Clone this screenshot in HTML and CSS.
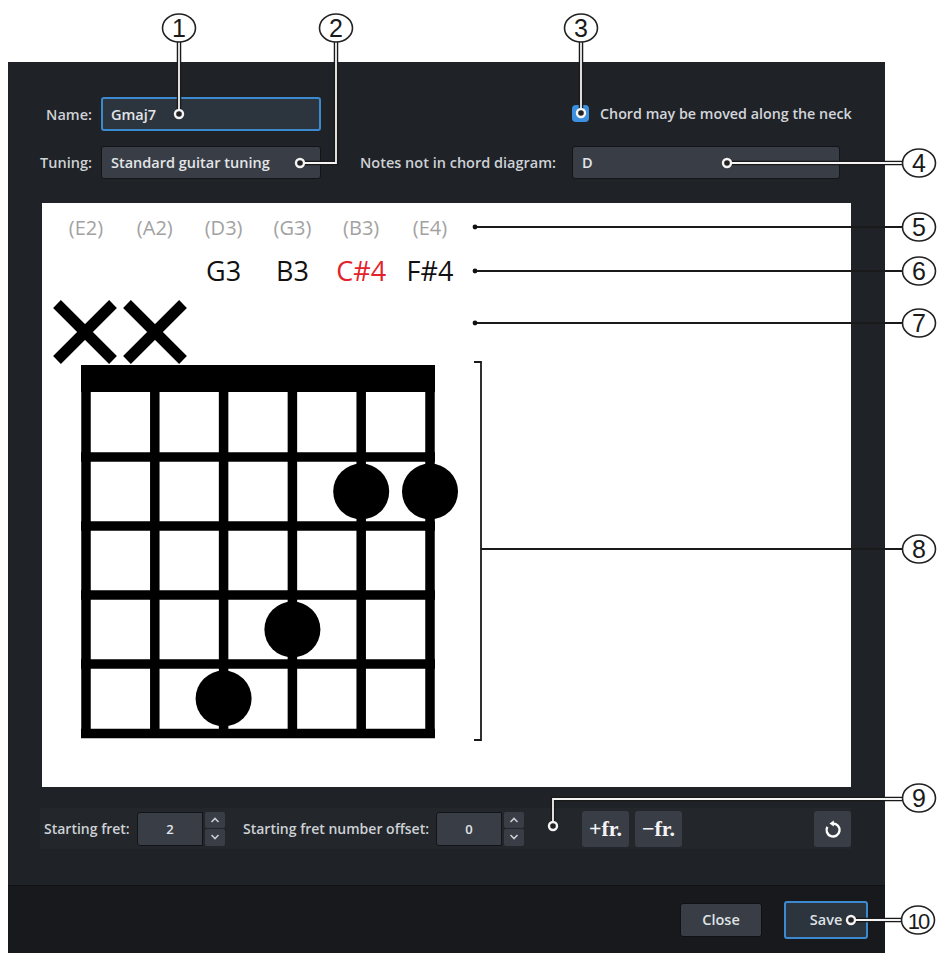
FILE: index.html
```html
<!DOCTYPE html>
<html>
<head>
  <meta charset="utf-8">
  <title>Edit Chord Diagram</title>
  <link rel="stylesheet" href="styles.css">
</head>
<body>

<div class="dialog">
  <!-- name, tuning and options -->
  <div class="fields">
    <label class="lbl">Name:</label>
    <div class="input active">Gmaj7</div>
    <div></div>
    <div class="check-row">
      <span class="checkbox">
        <svg viewBox="0 0 17 17" width="17" height="17"><path class="tick" d="M4.5 8.5 L7.5 11.5 L12.5 5.5"/></svg>
      </span>
      Chord may be moved along the neck
    </div>

    <label class="lbl">Tuning:</label>
    <div class="input select">Standard guitar tuning</div>
    <label class="lbl wide">Notes not in chord diagram:</label>
    <div class="input">D</div>
  </div>

  <!-- chord diagram canvas -->
  <div class="canvas">
    <svg class="diagram" viewBox="0 0 809 584" width="809" height="584">
      <g class="tuning">
        <text x="44" y="32">(E2)</text>
        <text x="112.8" y="32">(A2)</text>
        <text x="181.6" y="32">(D3)</text>
        <text x="250.4" y="32">(G3)</text>
        <text x="319.2" y="32">(B3)</text>
        <text x="388" y="32">(E4)</text>
      </g>
      <g class="notes">
        <text x="181.6" y="78">G3</text>
        <text x="250.4" y="78">B3</text>
        <text x="319.2" y="78" class="hl">C#4</text>
        <text x="388" y="78">F#4</text>
      </g>
      <g class="mute">
        <path d="M15 101 L71 157 M71 101 L15 157"/>
        <path d="M85 101 L141 157 M141 101 L85 157"/>
      </g>
      <rect class="nut" x="39" y="162" width="354" height="27"/>
      <g class="grid">
        <line x1="44" y1="162" x2="44" y2="535"/>
        <line x1="112.8" y1="162" x2="112.8" y2="535"/>
        <line x1="181.6" y1="162" x2="181.6" y2="535"/>
        <line x1="250.4" y1="162" x2="250.4" y2="535"/>
        <line x1="319.2" y1="162" x2="319.2" y2="535"/>
        <line x1="388" y1="162" x2="388" y2="535"/>
        <line x1="39" y1="254" x2="393" y2="254"/>
        <line x1="39" y1="323" x2="393" y2="323"/>
        <line x1="39" y1="392" x2="393" y2="392"/>
        <line x1="39" y1="461" x2="393" y2="461"/>
        <line x1="39" y1="530.5" x2="393" y2="530.5"/>
      </g>
      <g class="dots">
        <circle cx="319.2" cy="288.5" r="28"/>
        <circle cx="388" cy="288.5" r="28"/>
        <circle cx="250.4" cy="426.5" r="28"/>
        <circle cx="181.6" cy="495.5" r="28"/>
      </g>
    </svg>
  </div>

  <!-- fret controls -->
  <div class="controls">
    <span class="ctl-label first">Starting fret:</span>
    <div class="spin">
      <div class="spin-val">2</div>
      <div class="spin-btns">
        <span><svg viewBox="0 0 10 6" width="10" height="6"><path d="M1.5 5 L5 1.5 L8.5 5"/></svg></span>
        <span><svg viewBox="0 0 10 6" width="10" height="6"><path d="M1.5 1 L5 4.5 L8.5 1"/></svg></span>
      </div>
    </div>
    <span class="ctl-label second">Starting fret number offset:</span>
    <div class="spin">
      <div class="spin-val">0</div>
      <div class="spin-btns">
        <span><svg viewBox="0 0 10 6" width="10" height="6"><path d="M1.5 5 L5 1.5 L8.5 5"/></svg></span>
        <span><svg viewBox="0 0 10 6" width="10" height="6"><path d="M1.5 1 L5 4.5 L8.5 1"/></svg></span>
      </div>
    </div>
    <div class="fr-btns">
      <button class="fr">+fr.</button>
      <button class="fr">&minus;fr.</button>
    </div>
    <button class="reset">
      <svg viewBox="0 0 20 20" width="20" height="20">
        <path class="arc" d="M10 4.5 A6.5 6.5 0 1 1 4.4 7.8"/>
        <path class="head" d="M6.5 4.5 L10.8 1.6 L10.8 7.4 Z"/>
      </svg>
    </button>
  </div>

  <div class="footer">
    <button class="btn">Close</button>
    <button class="btn primary">Save</button>
  </div>
</div>

<!-- numbered callouts drawn over the screenshot -->
<svg class="callouts" viewBox="0 0 946 956" width="946" height="956">
  <g class="lead-out">
    <path d="M179 42 V114"/>
    <path d="M336 42 V163 H300"/>
    <path d="M581 42 V113"/>
    <path d="M727 163 H903"/>
    <path d="M553 826 V799 H902"/>
    <path d="M851 920 H901"/>
  </g>
  <g class="lead-in">
    <path d="M179 42 V114"/>
    <path d="M336 42 V163 H300"/>
    <path d="M581 42 V113"/>
    <path d="M727 163 H903"/>
    <path d="M553 826 V799 H902"/>
    <path d="M851 920 H901"/>
  </g>
  <g class="ring">
    <circle cx="179" cy="114" r="4"/>
    <circle cx="300" cy="163" r="4"/>
    <circle cx="581" cy="113" r="4"/>
    <circle cx="727" cy="163" r="4"/>
    <circle cx="553" cy="826" r="4"/>
    <circle cx="851" cy="920" r="4"/>
  </g>
  <g class="lead">
    <path d="M475 227 H903"/>
    <path d="M475 271 H903"/>
    <path d="M475 323 H903"/>
    <path d="M474 362 H481 V740 H474 M481 549 H903"/>
  </g>
  <g class="pin">
    <circle cx="475" cy="227" r="2.4"/>
    <circle cx="475" cy="271" r="2.4"/>
    <circle cx="475" cy="323" r="2.4"/>
  </g>
  <g class="num">
    <ellipse cx="179" cy="28" rx="16.5" ry="14"/><text x="179" y="37">1</text>
    <ellipse cx="336" cy="28" rx="16.5" ry="14"/><text x="336" y="37">2</text>
    <ellipse cx="581" cy="28" rx="16.5" ry="14"/><text x="581" y="37">3</text>
    <ellipse cx="919" cy="163" rx="16.5" ry="14"/><text x="919" y="172">4</text>
    <ellipse cx="919" cy="227" rx="16.5" ry="14"/><text x="919" y="236">5</text>
    <ellipse cx="919" cy="271" rx="16.5" ry="14"/><text x="919" y="280">6</text>
    <ellipse cx="919" cy="323" rx="16.5" ry="14"/><text x="919" y="332">7</text>
    <ellipse cx="919" cy="549" rx="16.5" ry="14"/><text x="919" y="558">8</text>
    <ellipse cx="919" cy="798" rx="16.5" ry="14"/><text x="919" y="807">9</text>
    <ellipse cx="918" cy="920" rx="16.5" ry="14"/><text x="918" y="929" class="two">10</text>
  </g>
</svg>

</body>
</html>
```

FILE: styles.css
```css
/* page */
body {
  margin: 0;
  width: 946px;
  height: 956px;
  background: #fff;
  font-family: "Open Sans", "Noto Sans", sans-serif;
  position: relative;
  overflow: hidden;
}

/* dialog frame */
.dialog {
  margin: 62px 0 0 8px;
  width: 877px;
  height: 891px;
  background: #1f2227;
  display: flex;
  flex-direction: column;
}

/* top form */
.fields {
  display: grid;
  grid-template-columns: 93px 220px 251px 268px;
  grid-template-rows: 34px 33px;
  row-gap: 15px;
  padding-top: 35px;
  align-items: center;
}

.lbl {
  text-align: right;
  padding-right: 9px;
  color: #cdd1d5;
  font-size: 14.5px;
  font-weight: 600;
}

.lbl.wide {
  padding-right: 16px;
}

.input {
  height: 100%;
  box-sizing: border-box;
  display: flex;
  align-items: center;
  padding-left: 9px;
  background: #393d45;
  border: 1px solid #121417;
  border-radius: 3px;
  color: #e3e6e9;
  font-size: 14.5px;
  font-weight: 600;
}

.input.active {
  border: 2px solid #3b8ad0;
  background: #2c343e;
  padding-left: 8px;
}

.check-row {
  display: flex;
  align-items: center;
  gap: 11px;
  margin-top: -2px;
  white-space: nowrap;
  color: #d3d6da;
  font-size: 14.3px;
  font-weight: 600;
}

.checkbox {
  width: 17px;
  height: 17px;
  border-radius: 4px;
  background: #3d8fe0;
  display: flex;
}

.tick {
  fill: none;
  stroke: #fff;
  stroke-width: 2;
}

/* diagram canvas */
.canvas {
  margin: 24px 0 0 34px;
  width: 809px;
  height: 584px;
  background: #fff;
}

.diagram {
  display: block;
}

.tuning text {
  font-family: "Open Sans", "Noto Sans", sans-serif;
  font-size: 20px;
  fill: #a2a2a2;
  text-anchor: middle;
}

.notes text {
  font-family: "Open Sans", "Noto Sans", sans-serif;
  font-size: 27px;
  fill: #111;
  text-anchor: middle;
}

.notes .hl {
  fill: #e3222b;
}

.mute path {
  stroke: #000;
  stroke-width: 11;
  fill: none;
}

.nut,
.dots circle {
  fill: #000;
}

.grid line {
  stroke: #000;
  stroke-width: 9.5;
}

/* fret controls */
.controls {
  margin: 21px 0 0 32px;
  width: 811px;
  height: 41px;
  box-sizing: border-box;
  display: flex;
  align-items: center;
  padding-left: 4px;
  background: #23272c;
}

.ctl-label {
  color: #cdd1d5;
  font-size: 14px;
  font-weight: 600;
  white-space: nowrap;
}

.ctl-label.first {
  width: 93px;
}

.ctl-label.second {
  width: 193px;
  margin-left: 18px;
}

.spin {
  display: flex;
  gap: 2px;
  height: 34px;
}

.spin-val {
  width: 66px;
  display: flex;
  align-items: center;
  justify-content: center;
  background: #393d45;
  border: 1px solid #121417;
  border-radius: 3px 0 0 3px;
  box-sizing: border-box;
  color: #e3e6e9;
  font-size: 13px;
  font-weight: 600;
}

.spin-btns {
  width: 20px;
  display: flex;
  flex-direction: column;
  gap: 1px;
}

.spin-btns span {
  flex: 1;
  display: flex;
  align-items: center;
  justify-content: center;
  background: #393d45;
  border-radius: 2px;
}

.spin-btns path {
  fill: none;
  stroke: #c9ccd0;
  stroke-width: 1.6;
}

.fr-btns {
  display: flex;
  gap: 6px;
  margin-left: 58px;
}

button {
  font-family: inherit;
  cursor: pointer;
}

.fr {
  width: 47px;
  height: 36px;
  padding: 0;
  border: none;
  border-radius: 3px;
  background: #393d45;
  color: #f2f3f5;
  font-family: "Liberation Serif", "DejaVu Serif", serif;
  font-size: 22px;
  font-weight: bold;
}

.reset {
  margin-left: auto;
  width: 37px;
  height: 36px;
  padding: 0;
  border: none;
  border-radius: 3px;
  background: #393d45;
  display: flex;
  align-items: center;
  justify-content: center;
}

.reset .arc {
  fill: none;
  stroke: #fff;
  stroke-width: 2.4;
}

.reset .head {
  fill: #fff;
}

/* bottom buttons */
.footer {
  margin-top: auto;
  height: 68px;
  box-sizing: border-box;
  border-top: 1px solid #0f1113;
  background: #17191c;
  display: flex;
  justify-content: flex-end;
  align-items: center;
  gap: 22px;
  padding-right: 17px;
}

.btn {
  width: 82px;
  height: 34px;
  border: 1px solid #0f1113;
  border-radius: 3px;
  background: #393d45;
  color: #dfe2e5;
  font-size: 14.5px;
  font-weight: 600;
}

.btn.primary {
  width: 84px;
  height: 38px;
  border: 2px solid #3b8ad0;
  background: #2c343e;
}

/* callout overlay */
.callouts {
  position: absolute;
  left: 0;
  top: 0;
  pointer-events: none;
}

.lead-out path {
  fill: none;
  stroke: #1a1a1a;
  stroke-width: 4.5;
}

.lead-in path {
  fill: none;
  stroke: #f4f4f4;
  stroke-width: 1.8;
}

.ring circle {
  fill: #222;
  stroke: #f4f4f4;
  stroke-width: 2.4;
}

.lead path {
  fill: none;
  stroke: #1a1a1a;
  stroke-width: 1.8;
}

.pin circle {
  fill: #111;
}

.num ellipse {
  fill: #fff;
  stroke: #222;
  stroke-width: 1.6;
}

.num text {
  font-family: "Liberation Sans", "DejaVu Sans", sans-serif;
  font-size: 25px;
  fill: #1a1a1a;
  text-anchor: middle;
}

.num text.two {
  font-size: 22px;
  letter-spacing: -2px;
}
```
